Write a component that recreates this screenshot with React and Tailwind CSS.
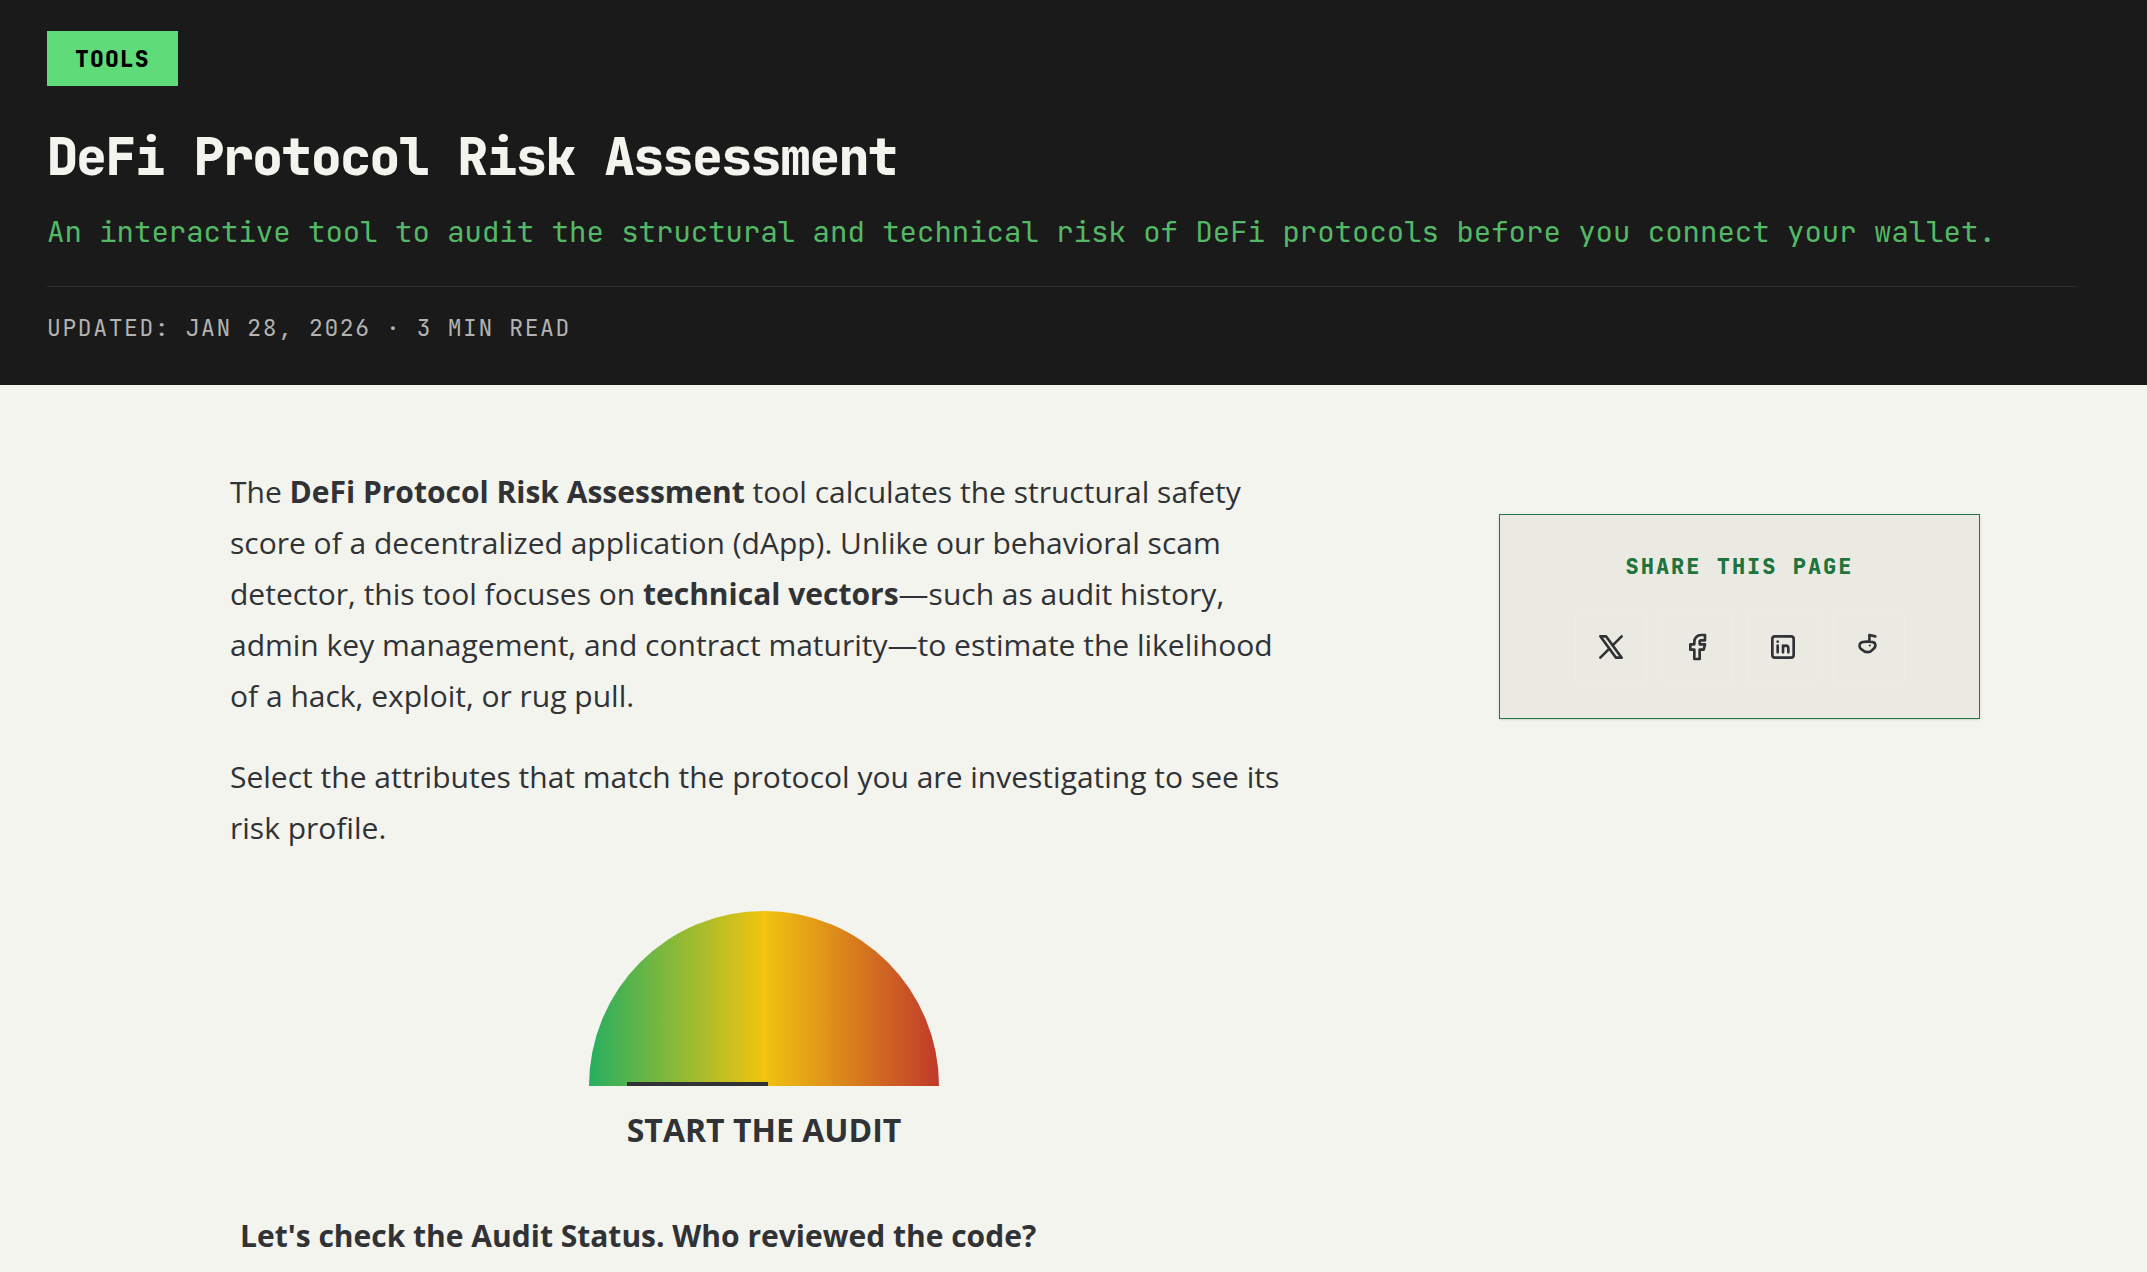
import { TbBrandX, TbBrandFacebook } from "react-icons/tb";

function OutlineIcon({ children }) {
  return (
    <svg
      viewBox="0 0 24 24"
      className="size-8"
      fill="none"
      stroke="currentColor"
      strokeWidth="2"
      strokeLinecap="round"
      strokeLinejoin="round"
      aria-hidden="true"
    >
      {children}
    </svg>
  );
}

const shareTargets = [
  { label: "Share on X", icon: <TbBrandX className="size-8" aria-hidden="true" /> },
  { label: "Share on Facebook", icon: <TbBrandFacebook className="size-8" aria-hidden="true" /> },
  {
    label: "Share on LinkedIn",
    icon: (
      <OutlineIcon>
        <rect x="4" y="4" width="16" height="16" rx="2" />
        <path d="M8 11v5M8 8v.01M12 16v-5M16 16v-3a2 2 0 0 0-4 0" />
      </OutlineIcon>
    ),
  },
  {
    label: "Share on Reddit",
    icon: (
      <OutlineIcon>
        <path d="M12 8c-2.600-.2-5.200 0-6.400 1.100c-1.300 1.500-.9 3.600 1 4.800c1.300 1.300 2.400 2 4.200 2s3-.8 4-2c1.800-1.300 2.400-3 1.600-4.700c-1-1-2.600-1.200-4.400-1.200z" />
        <path d="M12.300 8v-5l4.400 1" />
        <path d="M12.600 10.900v.01" strokeWidth="1.600" />
      </OutlineIcon>
    ),
  },
];

function PageHeader() {
  return (
    <header className="bg-[#1a1a1a] px-[47px] pt-[31px] pb-10 font-['JetBrains_Mono','DejaVu_Sans_Mono',monospace]">
      <a href="#tools" className="inline-block bg-[#5fdb79] px-7 pt-[13px] pb-[11px] text-[23px] leading-[31px] font-extrabold tracking-wider text-black">
        TOOLS
      </a>
      <h1 className="mt-[37px] text-[51px] leading-[68px] font-extrabold tracking-tight text-[#f4f4ee]">
        DeFi Protocol Risk Assessment
      </h1>
      <p className="mt-[19px] text-[29px] leading-[44px] text-[#54b966]">
        An interactive tool to audit the structural and technical risk of DeFi protocols before you connect your wallet.
      </p>
      <p className="mt-8 mr-[23px] border-t border-[#2e2e2e] pt-6 text-[23px] leading-[34px] tracking-[0.07em] text-[#b3b3b3]">
        UPDATED: JAN 28, 2026 · 3 MIN READ
      </p>
    </header>
  );
}

function RiskGauge() {
  return (
    <div className="mt-[58px] flex flex-col items-center">
      <div className="relative h-[175px] w-[350px] overflow-hidden rounded-t-full bg-linear-to-r/srgb from-[#27ae60] via-[#f1c40f] to-[#c0392b]">
        <div className="absolute bottom-0 left-[38px] h-1 w-[141px] bg-[#303236]" />
      </div>
      <p className="mt-5 text-[32px] leading-[48px] font-bold">START THE AUDIT</p>
    </div>
  );
}

function ShareCard() {
  return (
    <aside className="mt-12 w-[481px] self-start border border-[#24783f] bg-[#ebeae2] px-8 py-[35px] text-center shadow-sm">
      <h2 className="font-['JetBrains_Mono','DejaVu_Sans_Mono',monospace] text-[22px] leading-[34px] font-extrabold tracking-[2px] text-[#1f733c]">
        SHARE THIS PAGE
      </h2>
      <ul className="mt-[27px] flex justify-center gap-3.5">
        {shareTargets.map((target) => (
          <li key={target.label}>
            <a href="#share" aria-label={target.label} className="flex size-[72px] items-center justify-center border border-[#edece5]">
              {target.icon}
            </a>
          </li>
        ))}
      </ul>
    </aside>
  );
}

export default function App() {
  return (
    <div className="min-h-screen bg-[#f3f4ed] font-['Droid_Sans','Open_Sans',sans-serif] text-[#303236]">
      <PageHeader />
      <div className="flex justify-between pt-[81px] pr-[167px] pl-[230px]">
        <main className="w-[1068px] text-[30px] leading-[51px]">
          <p>
            The <strong>DeFi Protocol Risk Assessment</strong> tool calculates the structural safety score of a
            decentralized application (dApp). Unlike our behavioral scam detector, this tool focuses on{" "}
            <strong>technical vectors</strong>—such as audit history, admin key management, and contract maturity—to
            estimate the likelihood of a hack, exploit, or rug pull.
          </p>
          <p className="mt-[30px]">
            Select the attributes that match the protocol you are investigating to see its risk profile.
          </p>
          <RiskGauge />
          <h2 className="mt-14 px-2.5 font-bold">Let's check the Audit Status. Who reviewed the code?</h2>
        </main>
        <ShareCard />
      </div>
    </div>
  );
}
